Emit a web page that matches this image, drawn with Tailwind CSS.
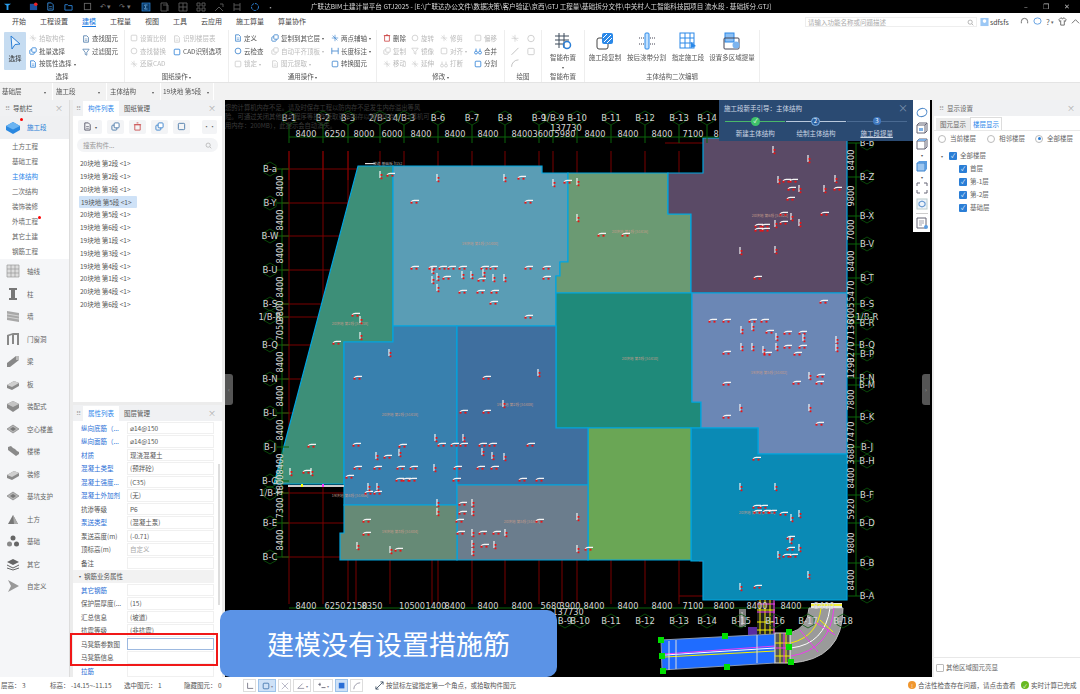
<!DOCTYPE html>
<html lang="zh">
<head>
<meta charset="UTF-8" />
<title>广联达BIM土建计量平台 GTJ2025</title>
<script src="https://cdn.jsdelivr.net/npm/@tailwindcss/browser@4"></script>
</head>
<body class="bg-white overflow-hidden">
<svg class="hidden">
  <symbol id="doc" viewBox="0 0 10 10"><path d="M2 1h4l2 2v6H2z" fill="none" stroke="currentColor"/><path d="M3.5 5h3M3.5 7h3" stroke="currentColor" stroke-width=".7"/></symbol>
  <symbol id="box" viewBox="0 0 10 10"><rect x="1.5" y="1.5" width="7" height="7" rx="1" fill="none" stroke="currentColor"/></symbol>
  <symbol id="two" viewBox="0 0 10 10"><rect x="1" y="3.5" width="5.5" height="5.5" rx="1" fill="none" stroke="currentColor"/><rect x="3.5" y="1" width="5.5" height="5.5" rx="1" fill="#fff" stroke="currentColor"/></symbol>
  <symbol id="cross" viewBox="0 0 10 10"><path d="M5 1v8M1 5h8M2 2l6 6" fill="none" stroke="currentColor" stroke-width=".8"/></symbol>
  <symbol id="circ" viewBox="0 0 10 10"><circle cx="5" cy="5" r="3.6" fill="none" stroke="currentColor"/></symbol>
  <symbol id="funnel" viewBox="0 0 10 10"><path d="M1 1.5h8L6 5.5V9L4 8V5.5z" fill="none" stroke="currentColor" stroke-width=".9"/></symbol>
  <symbol id="dots" viewBox="0 0 10 10"><circle cx="2.5" cy="7" r="1.8" fill="none" stroke="currentColor"/><circle cx="7.5" cy="7" r="1.8" fill="none" stroke="currentColor"/><path d="M2.5 5V2M7.5 5V2" stroke="currentColor"/></symbol>
  <symbol id="nav-cube" viewBox="0 0 14 14"><path d="M1 5l6-3 6 3v4l-6 4-6-4z" fill="#8a8a8a"/><path d="M1 5l6 3 6-3-6-3z" fill="#c4c4c4"/></symbol>
  <symbol id="nav-slab" viewBox="0 0 14 14"><path d="M1 8l7-4 5 2v3l-7 4-5-2z" fill="#8a8a8a"/><path d="M1 8l7-4 5 2-7 4z" fill="#cfcfcf"/></symbol>
  <symbol id="nav-diamond" viewBox="0 0 14 14"><path d="M1 7l6-4 6 4-6 4z" fill="#b4b4b4" stroke="#777" stroke-width=".6"/><path d="M4 7l3-2 3 2-3 2z" fill="#777"/></symbol>
  <symbol id="nav-stairs" viewBox="0 0 14 14"><path d="M2 3l3-1 2 2 2 1 2 2 2 1v2l-3 2-8-6z" fill="#8a8a8a"/></symbol>
  <symbol id="nav-pile" viewBox="0 0 14 14"><circle cx="7" cy="4" r="2.5" fill="#666"/><circle cx="3.5" cy="10" r="2.5" fill="#888"/><circle cx="10.500" cy="10" r="2.5" fill="#666"/></symbol>
</svg>

<div class="w-[1080px] h-[694px] flex flex-col relative blur-[0.4px] font-['Noto_Sans_CJK_SC','Liberation_Sans',sans-serif] text-[6.5px] leading-none text-[#555]">

  <!-- title bar -->
  <div class="h-[13px] bg-black flex items-center text-white shrink-0">
    <div class="w-[311px] flex items-center pl-[3px] gap-[8px] shrink-0">
      <svg width="9" height="9" viewBox="0 0 10 10"><path d="M1 2h8L6 4v5H4V4z" fill="#2aa0f0"/></svg>
      <svg class="ml-[9px]" width="9" height="9" viewBox="0 0 10 10"><rect x="1" y="2" width="8" height="7" fill="#1d4f9c"/><circle cx="7.500" cy="2.500" r="2" fill="#e22"/></svg>
      <svg width="9" height="9" viewBox="0 0 10 10" class="text-[#3a8fe0]"><use href="#doc"/></svg>
      <svg class="ml-[1px]" width="9" height="9" viewBox="0 0 10 10"><path d="M1 3h3l1 1h4v5H1z" fill="none" stroke="#2c86da"/></svg>
      <svg class="ml-[2px]" width="9" height="9" viewBox="0 0 10 10"><rect x="1.500" y="1.500" width="7" height="7" fill="none" stroke="#666"/></svg>
      <span class="text-[#777]">↶ ▾</span>
      <span class="text-[#777]">↷ ▾</span>
      <svg class="ml-[2px]" width="10" height="10" viewBox="0 0 10 10"><rect x="1" y="1" width="8" height="8" fill="#0c3a66" stroke="#2c86da" stroke-width=".7"/><path d="M3.500 3h3M3.500 7h3M3.500 3L5 5 3.500 7" fill="none" stroke="#7fc2f5" stroke-width=".7"/></svg>
      <svg class="ml-[1px]" width="10" height="10" viewBox="0 0 10 10"><path d="M1 1h6v8H1zM3 3h5v6" fill="none" stroke="#555"/></svg>
      <svg width="10" height="10" viewBox="0 0 10 10"><path d="M1 1h8v8H1zM1 5h8M5 1v8" fill="none" stroke="#555"/></svg>
      <svg width="10" height="10" viewBox="0 0 10 10"><path d="M1 1h3v3H1zM6 1h3v3H6zM1 6h3v3H1zM6 6h3v3H6z" fill="none" stroke="#555"/></svg>
      <svg width="10" height="10" viewBox="0 0 10 10"><path d="M1 9l4-4 4 4M6 2h3v3" fill="none" stroke="#555"/></svg>
      <svg width="10" height="10" viewBox="0 0 10 10"><path d="M2 1v8M8 1v8M2 3h6M2 7h6" fill="none" stroke="#555"/></svg>
      <svg width="10" height="10" viewBox="0 0 10 10"><circle cx="5" cy="5" r="3.500" fill="none" stroke="#2c7fd0" stroke-dasharray="3 1"/></svg>
      <span class="text-[#999] text-[5px]">▪</span>
    </div>
    <div class="flex-1 text-[6.6px] whitespace-nowrap text-[#ddd]">广联达BIM土建计量平台 GTJ2025 - [E:\广联达办公文件\数据决策\客户验证\京西\GTJ 工程量\基础拆分文件\中关村人工智能科技园项目 流水段 - 基础拆分.GTJ]</div>
    <div class="w-[66px] flex gap-[15px] text-[#bbb] text-[7px] pl-[10px]"><span>–</span><span>❐</span><span>✕</span></div>
  </div>

  <!-- tabs -->
  <div class="h-[17px] flex items-center shrink-0 bg-white text-[7px] text-[#444] pl-[12px] gap-[14px] relative">
    <span>开始</span><span>工程设置</span>
    <span class="text-[#1c7ae0] border-b border-[#1c7ae0] pb-[1px] mt-[1px]">建模</span>
    <span>工程量</span><span>视图</span><span>工具</span><span>云应用</span><span>施工算量</span><span>算量协作</span>
    <div class="absolute left-[805px] top-[4px] w-[172px] h-[10px] border border-[#eee] text-[#aaa] text-[6.5px] flex items-center justify-between px-[2px]"><span>请输入功能名称或问题描述</span><svg width="7" height="7" viewBox="0 0 10 10"><circle cx="4.500" cy="4.500" r="3" fill="none" stroke="#999"/><path d="M7 7l2 2" stroke="#999"/></svg></div>
    <div class="absolute left-[980px] top-[4px] flex items-center gap-[1px] text-[#444]">
      <svg width="9" height="10" viewBox="0 0 10 10"><rect x=".5" y=".5" width="9" height="9" fill="#9cc8f5"/><circle cx="5" cy="4" r="2" fill="#fff"/></svg><span class="text-[7px]">sdfsfs</span>
    </div>
    <div class="absolute left-[1020px] top-[4px] flex items-center gap-[4px] text-[#666]">
      <svg width="9" height="9" viewBox="0 0 10 10"><path d="M1.500 7V5a3.500 3.500 0 017 0v2" fill="none" stroke="#666"/></svg>
      <svg width="9" height="9" viewBox="0 0 10 10"><ellipse cx="5" cy="4.500" rx="4" ry="3.500" fill="none" stroke="#5a9be0"/></svg>
      <span class="text-[8px]">?</span><span class="text-[5px] -ml-[3px]">▾</span>
      <svg width="9" height="9" viewBox="0 0 10 10"><path d="M3 1L1 3l1 2 1-1v5h4V4l1 1 1-2-2-2H6a1 1 0 01-2 0z" fill="none" stroke="#666"/></svg>
      <svg width="9" height="9" viewBox="0 0 10 10"><path d="M1 7l4-4 4 4" fill="none" stroke="#666"/></svg>
    </div>
  </div>

  <!-- ribbon -->
  <div class="h-[53px] flex shrink-0 bg-white border-b border-[#e4e4e4]">
    <!-- 选择 -->
    <div class="w-[125px] flex flex-col border-r border-[#eee]">
      <div class="h-[40px] flex pl-[4px] pt-[2px]">
        <div class="w-[22px] h-[38px] bg-[#c6dcf1] rounded-[1px] flex flex-col items-center pt-[3px] gap-[5px] text-[#333]">
          <svg width="13" height="15" viewBox="0 0 13 15"><path d="M2 1l9 8-5 .5L3 14z" fill="#e8f2fb" stroke="#2a7ed6"/></svg>
          <span class="text-[6.5px]">选择</span>
        </div>
        <div class="w-[53px] ml-[3px] flex flex-col">
          <div class="h-[13px] flex items-center gap-[2px] text-[#bbb]"><svg width="8" height="8" class="text-[#ccc]"><use href="#cross"/></svg>拾取构件</div>
          <div class="h-[13px] flex items-center gap-[2px]"><svg width="8" height="8" class="text-[#2a7ed6]"><use href="#two"/></svg>批量选择</div>
          <div class="h-[13px] flex items-center gap-[2px] whitespace-nowrap"><svg width="8" height="8" class="text-[#2a7ed6]"><use href="#doc"/></svg>按属性选择 <span class="text-[4px]">▾</span></div>
        </div>
        <div class="flex flex-col">
          <div class="h-[13px] flex items-center gap-[2px] whitespace-nowrap"><svg width="8" height="8" class="text-[#4a78a8]"><use href="#doc"/></svg>查找图元</div>
          <div class="h-[13px] flex items-center gap-[2px] whitespace-nowrap"><svg width="8" height="8" class="text-[#4a78a8]"><use href="#funnel"/></svg>过滤图元</div>
        </div>
      </div>
      <div class="flex-1 text-center pt-[3px]">选择</div>
    </div>
    <!-- 图纸操作 -->
    <div class="w-[104px] flex flex-col border-r border-[#eee]">
      <div class="h-[40px] flex pl-[5px] pt-[2px] text-[#bbb]">
        <div class="w-[43px] flex flex-col">
          <div class="h-[13px] flex items-center gap-[2px]"><svg width="8" height="8" class="text-[#ccc]"><use href="#box"/></svg>设置比例</div>
          <div class="h-[13px] flex items-center gap-[2px]"><svg width="8" height="8" class="text-[#ccc]"><use href="#circ"/></svg>查找替换</div>
          <div class="h-[13px] flex items-center gap-[2px]"><svg width="8" height="8" class="text-[#ccc]"><use href="#cross"/></svg>还原CAD</div>
        </div>
        <div class="flex flex-col">
          <div class="h-[13px] flex items-center gap-[2px] whitespace-nowrap"><svg width="8" height="8" class="text-[#ccc]"><use href="#doc"/></svg>识别楼层表</div>
          <div class="h-[13px] flex items-center gap-[2px] whitespace-nowrap text-[#555]"><svg width="8" height="8" class="text-[#2a7ed6]"><use href="#box"/></svg>CAD识别选项</div>
        </div>
      </div>
      <div class="flex-1 text-center pt-[3px]">图纸操作 <span class="text-[4px]">▾</span></div>
    </div>
    <!-- 通用操作 -->
    <div class="w-[148px] flex flex-col border-r border-[#eee]">
      <div class="h-[40px] flex pl-[5px] pt-[2px]">
        <div class="w-[37px] flex flex-col">
          <div class="h-[13px] flex items-center gap-[2px]"><svg width="8" height="8" class="text-[#3a82cc]"><use href="#doc"/></svg>定义</div>
          <div class="h-[13px] flex items-center gap-[2px]"><svg width="8" height="8" class="text-[#3a82cc]"><use href="#circ"/></svg>云检查</div>
          <div class="h-[13px] flex items-center gap-[2px] text-[#bbb]"><svg width="8" height="8" class="text-[#ccc]"><use href="#box"/></svg>锁定 <span class="text-[4px]">▾</span></div>
        </div>
        <div class="w-[60px] flex flex-col">
          <div class="h-[13px] flex items-center gap-[2px] whitespace-nowrap"><svg width="8" height="8" class="text-[#3a82cc]"><use href="#two"/></svg>复制到其它层 <span class="text-[4px]">▾</span></div>
          <div class="h-[13px] flex items-center gap-[2px] whitespace-nowrap text-[#bbb]"><svg width="8" height="8" class="text-[#ccc]"><use href="#two"/></svg>自动平齐顶板 <span class="text-[4px]">▾</span></div>
          <div class="h-[13px] flex items-center gap-[2px] whitespace-nowrap text-[#bbb]"><svg width="8" height="8" class="text-[#ccc]"><use href="#doc"/></svg>图元提取 <span class="text-[4px]">▾</span></div>
        </div>
        <div class="flex flex-col">
          <div class="h-[13px] flex items-center gap-[2px] whitespace-nowrap"><svg width="8" height="8" class="text-[#3a82cc]"><use href="#cross"/></svg>两点辅轴 <span class="text-[4px]">▾</span></div>
          <div class="h-[13px] flex items-center gap-[2px] whitespace-nowrap"><svg width="8" height="8" viewBox="0 0 10 10"><path d="M1 1v8M9 1v8M1 5h8" fill="none" stroke="#3a82cc"/></svg>长度标注 <span class="text-[4px]">▾</span></div>
          <div class="h-[13px] flex items-center gap-[2px] whitespace-nowrap"><svg width="8" height="8" class="text-[#3a82cc]"><use href="#box"/></svg>转换图元</div>
        </div>
      </div>
      <div class="flex-1 text-center pt-[3px]">通用操作 <span class="text-[4px]">▾</span></div>
    </div>
    <!-- 修改 -->
    <div class="w-[128px] flex flex-col border-r border-[#eee]">
      <div class="h-[40px] flex pl-[6px] pt-[2px] text-[#bbb]">
        <div class="w-[28px] flex flex-col">
          <div class="h-[13px] flex items-center gap-[2px] text-[#555]"><svg width="8" height="8" viewBox="0 0 10 10"><path d="M2 2h6v7H2zM1 2h8M4 1h2" fill="none" stroke="#c44"/></svg>删除</div>
          <div class="h-[13px] flex items-center gap-[2px]"><svg width="8" height="8" class="text-[#ccc]"><use href="#two"/></svg>复制</div>
          <div class="h-[13px] flex items-center gap-[2px]"><svg width="8" height="8" class="text-[#ccc]"><use href="#cross"/></svg>移动</div>
        </div>
        <div class="w-[29px] flex flex-col">
          <div class="h-[13px] flex items-center gap-[2px]"><svg width="8" height="8" class="text-[#ccc]"><use href="#circ"/></svg>旋转</div>
          <div class="h-[13px] flex items-center gap-[2px]"><svg width="8" height="8" class="text-[#ccc]"><use href="#funnel"/></svg>镜像</div>
          <div class="h-[13px] flex items-center gap-[2px]"><svg width="8" height="8" class="text-[#ccc]"><use href="#cross"/></svg>延伸</div>
        </div>
        <div class="w-[34px] flex flex-col">
          <div class="h-[13px] flex items-center gap-[2px]"><svg width="8" height="8" class="text-[#ccc]"><use href="#cross"/></svg>修剪</div>
          <div class="h-[13px] flex items-center gap-[2px]"><svg width="8" height="8" class="text-[#ccc]"><use href="#box"/></svg>对齐 <span class="text-[4px]">▾</span></div>
          <div class="h-[13px] flex items-center gap-[2px]"><svg width="8" height="8" class="text-[#ccc]"><use href="#dots"/></svg>打断</div>
        </div>
        <div class="flex flex-col">
          <div class="h-[13px] flex items-center gap-[2px]"><svg width="8" height="8" class="text-[#ccc]"><use href="#box"/></svg>偏移</div>
          <div class="h-[13px] flex items-center gap-[2px] text-[#555]"><svg width="8" height="8" class="text-[#2a7ed6]"><use href="#dots"/></svg>合并</div>
          <div class="h-[13px] flex items-center gap-[2px] text-[#555]"><svg width="8" height="8" class="text-[#2a7ed6]"><use href="#box"/></svg>分割</div>
        </div>
      </div>
      <div class="flex-1 text-center pt-[3px]">修改 <span class="text-[4px]">▾</span></div>
    </div>
    <!-- 绘图 -->
    <div class="w-[37px] flex flex-col border-r border-[#eee]">
      <div class="h-[40px] flex pl-[5px] gap-[6px] pt-[2px]">
        <div class="flex flex-col"><svg class="my-[2px]" width="10" height="9" color="#ccc"><use href="#cross"/></svg><svg class="my-[2px]" width="10" height="9" viewBox="0 0 10 10"><path d="M1 9l8-8" stroke="#bbb"/></svg><svg class="my-[2px]" width="10" height="9" viewBox="0 0 10 10"><path d="M1 9a8 8 0 018-8" fill="none" stroke="#bbb"/></svg></div>
        <div class="flex flex-col"><svg class="my-[2px]" width="10" height="9" color="#ccc"><use href="#circ"/></svg><svg class="my-[2px]" width="10" height="9" color="#ccc"><use href="#box"/></svg></div>
      </div>
      <div class="flex-1 text-center pt-[3px]">绘图</div>
    </div>
    <!-- 智能布置 -->
    <div class="w-[43px] flex flex-col border-r border-[#eee]">
      <div class="h-[40px] flex flex-col items-center pt-[2px] gap-[4px]">
        <svg width="18" height="18" viewBox="0 0 18 18"><path d="M1 4h14M1 8h14M1 12h9M5 1v15M10 1v15" stroke="#3c4a5a" fill="none"/><circle cx="13" cy="13" r="3.500" fill="none" stroke="#2a7ed6" stroke-width="1.500"/></svg>
        <span>智能布置</span><span class="text-[4px]">▾</span>
      </div>
      <div class="flex-1 text-center pt-[3px]">智能布置</div>
    </div>
    <!-- 主体结构二次编辑 -->
    <div class="w-[175px] flex flex-col border-r border-[#eee]">
      <div class="h-[40px] flex pt-[2px] pl-[4px] gap-[6px]">
        <div class="flex flex-col items-center gap-[4px] w-[32px]">
          <svg width="18" height="18" viewBox="0 0 18 18"><rect x="1" y="6" width="11" height="11" rx="2" fill="#fff" stroke="#444"/><rect x="6" y="1" width="11" height="11" rx="2" fill="#2a88e8"/><path d="M8 10l7-7M11 11l5-5M7 6l4-4" stroke="#fff"/></svg>
          <span class="whitespace-nowrap">施工段复制</span>
        </div>
        <div class="flex flex-col items-center gap-[4px] w-[39px]">
          <svg width="18" height="18" viewBox="0 0 18 18"><rect x="7" y="1" width="4" height="16" rx="1" fill="#bfe0ff" stroke="#2a88e8"/><path d="M1 6h5M1 12h5M12 6h5M12 12h5" stroke="#445" stroke-dasharray="1 1"/></svg>
          <span class="whitespace-nowrap">按后浇带分割</span>
        </div>
        <div class="flex flex-col items-center gap-[4px] w-[32px]">
          <svg width="18" height="18" viewBox="0 0 18 18"><rect x="1" y="1" width="14" height="15" fill="#fff" stroke="#2a88e8"/><path d="M1 6h14M1 11h14M6 1v15M11 1v15" stroke="#2a88e8"/><path d="M12 10l5 4-5 2z" fill="#2a88e8"/></svg>
          <span class="whitespace-nowrap">指定施工段</span>
        </div>
        <div class="flex flex-col items-center gap-[4px] w-[44px]">
          <svg width="18" height="18" viewBox="0 0 18 18"><rect x="2" y="1" width="9" height="9" fill="#8cc0f5" stroke="#2a88e8"/><rect x="1" y="6" width="15" height="11" rx="1" fill="none" stroke="#445"/><circle cx="13" cy="13" r="3.500" fill="#7db4ee"/></svg>
          <span class="whitespace-nowrap">设置多区域提量</span>
        </div>
      </div>
      <div class="flex-1 text-center pt-[3px]">主体结构二次编辑</div>
    </div>
    <div class="flex-1"></div>
  </div>

  <!-- floor bar -->
  <div class="h-[17px] bg-[#f2f2f2] flex shrink-0 text-[#555] gap-[1px]">
    <div class="w-[53px] flex items-center justify-between px-[2px] pr-[6px] border-r border-white">基础层<span class="text-[4px]">▾</span></div>
    <div class="w-[53px] flex items-center justify-between px-[2px] pr-[6px] border-r border-white">施工段<span class="text-[4px]">▾</span></div>
    <div class="w-[53px] flex items-center justify-between px-[2px] pr-[6px] border-r border-white">主体结构<span class="text-[4px]">▾</span></div>
    <div class="w-[52px] flex items-center justify-between px-[1px] pr-[4px] border-r border-white whitespace-nowrap">19块地 第5段<span class="text-[4px]">▾</span></div>
  </div>

  <!-- main -->
  <div class="h-[577px] flex bg-[#ececec] relative shrink-0">

    <!-- left nav -->
    <div class="w-[70px] bg-[#f5f6f8] border-r border-[#ddd] flex flex-col shrink-0">
      <div class="h-[16px] flex items-center justify-between pl-[5px] pr-[6px] bg-[#f0f1f3]">
        <span class="flex items-center gap-[3px]"><span class="text-[#aaa] text-[7px]">⠿</span>导航栏</span><span class="text-[#aaa] text-[8px]">×</span>
      </div>
      <div class="h-[23px] bg-[#eff0f2] flex items-center pl-[6px] gap-[7px] relative">
        <svg width="14" height="13" viewBox="0 0 14 13"><path d="M0 5l7-4 7 4v4l-7 4-7-4z" fill="#2a88e0"/><path d="M0 5l7-4 7 4-7 3.500z" fill="#6ab4f2"/></svg>
        <span class="text-[#2a7ed6]">施工段</span>
        <span class="absolute left-[20px] top-[2px] w-[3px] h-[3px] rounded-full bg-[#f00]"></span>
      </div>
      <div class="bg-white flex flex-col pl-[12px] h-[120px] text-[#666]">
        <div class="h-[15px] flex items-center">土方工程</div>
        <div class="h-[15px] flex items-center">基础工程</div>
        <div class="h-[15px] flex items-center text-[#2a86ea]">主体结构</div>
        <div class="h-[15px] flex items-center">二次结构</div>
        <div class="h-[15px] flex items-center">装饰装修</div>
        <div class="h-[15px] flex items-center relative">外墙工程<span class="absolute left-[26px] top-[2px] w-[3px] h-[3px] rounded-full bg-[#f00]"></span></div>
        <div class="h-[15px] flex items-center">其它土建</div>
        <div class="h-[15px] flex items-center">钢筋工程</div>
      </div>
      <div class="flex flex-col pl-[6px] text-[#666] pt-[1px]">
        <div class="h-[22.5px] flex items-center gap-[7px]"><svg width="14" height="14" viewBox="0 0 14 14"><path d="M1 1h12v12H1zM1 5h12M1 9h12M5 1v12M9 1v12" fill="#ddd" stroke="#999" stroke-width=".7"/></svg>轴线</div>
        <div class="h-[22.5px] flex items-center gap-[7px]"><svg width="14" height="14" viewBox="0 0 14 14"><path d="M3 1h8v2H9v8h2v2H3v-2h2V3H3z" fill="#777"/></svg>柱</div>
        <div class="h-[22.5px] flex items-center gap-[7px]"><svg width="14" height="14" viewBox="0 0 14 14"><path d="M1 2l12 2v9L1 11z" fill="#a8a8a8"/><path d="M1 5l12 2M1 8l12 2" stroke="#eee" stroke-width=".6"/></svg>墙</div>
        <div class="h-[22.5px] flex items-center gap-[7px]"><svg width="14" height="14" viewBox="0 0 14 14"><path d="M1 13V3l6-2h6v12h-2V3H8v9H6V3L3 4v9z" fill="#888"/></svg>门窗洞</div>
        <div class="h-[22.5px] flex items-center gap-[7px]"><svg width="14" height="14" viewBox="0 0 14 14"><path d="M1 9l9-7h3v4l-9 7H1z" fill="#888"/><path d="M10 2h3v4h-3z" fill="#bbb"/></svg>梁</div>
        <div class="h-[22.5px] flex items-center gap-[7px]"><svg width="14" height="14"><use href="#nav-slab"/></svg>板</div>
        <div class="h-[22.5px] flex items-center gap-[7px]"><svg width="14" height="14"><use href="#nav-cube"/></svg>装配式</div>
        <div class="h-[22.5px] flex items-center gap-[7px]"><svg width="14" height="14"><use href="#nav-diamond"/></svg>空心楼盖</div>
        <div class="h-[22.5px] flex items-center gap-[7px]"><svg width="14" height="14"><use href="#nav-stairs"/></svg>楼梯</div>
        <div class="h-[22.5px] flex items-center gap-[7px]"><svg width="14" height="14"><use href="#nav-slab"/></svg>装修</div>
        <div class="h-[22.5px] flex items-center gap-[7px]"><svg width="14" height="14"><use href="#nav-diamond"/></svg>基坑支护</div>
        <div class="h-[22.5px] flex items-center gap-[7px]"><svg width="14" height="14" viewBox="0 0 14 14"><path d="M2 12l5-9 5 9z" fill="#777"/><path d="M7 3l5 9H8z" fill="#aaa"/></svg>土方</div>
        <div class="h-[22.5px] flex items-center gap-[7px]"><svg width="14" height="14"><use href="#nav-pile"/></svg>基础</div>
        <div class="h-[22.5px] flex items-center gap-[7px]"><svg width="14" height="14" viewBox="0 0 14 14"><path d="M1 5l6-3 6 3-6 3z" fill="#666"/><path d="M1 8l6 3 6-3M1 11l6 2 6-2" fill="none" stroke="#666"/></svg>其它</div>
        <div class="h-[22.5px] flex items-center gap-[7px]"><svg width="14" height="14" viewBox="0 0 14 14"><path d="M2 1l11 6-11 6 3-6z" fill="#999"/></svg>自定义</div>
      </div>
    </div>

    <!-- centre panels -->
    <div class="w-[149px] ml-[3px] flex flex-col gap-[3px] shrink-0">
      <div class="h-[302px] bg-white flex flex-col">
        <div class="h-[16px] bg-[#f0f1f3] flex items-center relative shrink-0">
          <span class="text-[#aaa] text-[7px] pl-[3px] w-[10px]">⠿</span>
          <span class="h-[15px] mt-[1px] w-[36px] bg-white text-[#2a86ea] flex items-center justify-center">构件列表</span>
          <span class="pl-[5px]">图纸管理</span>
          <span class="absolute right-[6px] text-[#aaa] text-[8px]">×</span>
        </div>
        <div class="h-[18px] flex items-center pl-[5px] pt-[3px] gap-[5px] shrink-0">
          <span class="w-[24px] h-[14px] bg-[#f3f4f6] rounded-[2px] flex items-center justify-center gap-[3px]"><svg width="9" height="9" color="#556"><use href="#doc"/></svg><span class="text-[4px]">▾</span></span>
          <span class="w-[17px] h-[14px] bg-[#f3f4f6] rounded-[2px] flex items-center justify-center"><svg width="9" height="9" color="#4a78a8"><use href="#two"/></svg></span>
          <span class="w-[17px] h-[14px] bg-[#f3f4f6] rounded-[2px] flex items-center justify-center"><svg width="9" height="9" viewBox="0 0 10 10"><path d="M2 3h6v6H2zM1 3h8M4 1h2" fill="none" stroke="#c55"/></svg></span>
          <span class="w-[17px] h-[14px] bg-[#f3f4f6] rounded-[2px] flex items-center justify-center"><svg width="9" height="9" color="#3a82cc"><use href="#two"/></svg></span>
          <span class="w-[17px] h-[14px] bg-[#f3f4f6] rounded-[2px] flex items-center justify-center"><svg width="9" height="9" color="#4a78a8"><use href="#box"/></svg></span>
          <span class="w-[15px] h-[14px] bg-[#f3f4f6] rounded-[2px] flex items-center justify-center ml-[7px] text-[6px]">••</span>
        </div>
        <div class="mx-[4px] mt-[4px] h-[14px] rounded-[7px] bg-[#f3f4f6] flex items-center justify-between px-[6px] text-[#999] shrink-0">搜索构件...<svg width="7" height="7" viewBox="0 0 10 10"><circle cx="4.500" cy="4.500" r="3" fill="none" stroke="#aaa"/><path d="M7 7l2 2" stroke="#aaa"/></svg></div>
        <div class="flex flex-col mt-[5px] pl-[6px] text-[6.5px]">
          <div class="h-[12.8px] flex items-center px-[1px]">20块地 第2段 &lt;1&gt;</div>
          <div class="h-[12.8px] flex items-center px-[1px]">19块地 第2段 &lt;1&gt;</div>
          <div class="h-[12.8px] flex items-center px-[1px]">20块地 第3段 &lt;1&gt;</div>
          <div class="h-[12px] my-[0.4px] flex items-center px-[2px] w-[58px] bg-[#cfe2f7] rounded-[1px]">19块地 第5段 &lt;1&gt;</div>
          <div class="h-[12.8px] flex items-center px-[1px]">20块地 第5段 &lt;1&gt;</div>
          <div class="h-[12.8px] flex items-center px-[1px]">19块地 第6段 &lt;1&gt;</div>
          <div class="h-[12.8px] flex items-center px-[1px]">19块地 第1段 &lt;1&gt;</div>
          <div class="h-[12.8px] flex items-center px-[1px]">19块地 第3段 &lt;1&gt;</div>
          <div class="h-[12.8px] flex items-center px-[1px]">19块地 第4段 &lt;1&gt;</div>
          <div class="h-[12.8px] flex items-center px-[1px]">20块地 第1段 &lt;1&gt;</div>
          <div class="h-[12.8px] flex items-center px-[1px]">20块地 第4段 &lt;1&gt;</div>
          <div class="h-[12.8px] flex items-center px-[1px]">20块地 第6段 &lt;1&gt;</div>
        </div>
      </div>
      <div class="flex-1 bg-white flex flex-col overflow-hidden relative">
        <div class="h-[16px] bg-[#f0f1f3] flex items-center relative shrink-0">
          <span class="text-[#aaa] text-[7px] pl-[3px] w-[10px]">⠿</span>
          <span class="h-[15px] mt-[1px] w-[36px] bg-white text-[#2a86ea] flex items-center justify-center">属性列表</span>
          <span class="pl-[5px]">图层管理</span>
          <span class="absolute right-[6px] text-[#aaa] text-[8px]">×</span>
        </div>
        <div class="absolute right-[2px] top-[59px] w-[2px] h-[141px] bg-[#ddd]"></div>
        <div class="flex flex-col text-[6.5px]">
          <div class="h-[13.5px] flex items-center"><span class="w-[54px] pl-[8px] text-[#2a6fd6]">纵向底筋（...</span><span class="w-[87px] h-[12.5px] border border-[#f0f0f0] flex items-center px-[2px]">⌀14@150</span></div>
          <div class="h-[13.5px] flex items-center"><span class="w-[54px] pl-[8px] text-[#2a6fd6]">纵向面筋（...</span><span class="w-[87px] h-[12.5px] border border-[#f0f0f0] flex items-center px-[2px]">⌀14@150</span></div>
          <div class="h-[13.5px] flex items-center"><span class="w-[54px] pl-[8px] text-[#2a6fd6]">材质</span><span class="w-[87px] h-[12.5px] border border-[#f0f0f0] flex items-center px-[2px]">现浇混凝土</span></div>
          <div class="h-[13.5px] flex items-center"><span class="w-[54px] pl-[8px] text-[#2a6fd6]">混凝土类型</span><span class="w-[87px] h-[12.5px] border border-[#f0f0f0] flex items-center px-[2px]">(预拌砼)</span></div>
          <div class="h-[13.5px] flex items-center"><span class="w-[54px] pl-[8px] text-[#2a6fd6]">混凝土强度...</span><span class="w-[87px] h-[12.5px] border border-[#f0f0f0] flex items-center px-[2px]">(C35)</span></div>
          <div class="h-[13.5px] flex items-center"><span class="w-[54px] pl-[8px] text-[#2a6fd6]">混凝土外加剂</span><span class="w-[87px] h-[12.5px] border border-[#f0f0f0] flex items-center px-[2px]">(无)</span></div>
          <div class="h-[13.5px] flex items-center"><span class="w-[54px] pl-[8px]">抗渗等级</span><span class="w-[87px] h-[12.5px] border border-[#f0f0f0] flex items-center px-[2px]">P6</span></div>
          <div class="h-[13.5px] flex items-center"><span class="w-[54px] pl-[8px] text-[#2a6fd6]">泵送类型</span><span class="w-[87px] h-[12.5px] border border-[#f0f0f0] flex items-center px-[2px]">(混凝土泵)</span></div>
          <div class="h-[13.5px] flex items-center"><span class="w-[54px] pl-[8px]">泵送高度(m)</span><span class="w-[87px] h-[12.5px] border border-[#f0f0f0] flex items-center px-[2px]">(-0.71)</span></div>
          <div class="h-[13.5px] flex items-center"><span class="w-[54px] pl-[8px]">顶标高(m)</span><span class="w-[87px] h-[12.5px] border border-[#f0f0f0] flex items-center px-[2px] text-[#aaa]">自定义</span></div>
          <div class="h-[13.5px] flex items-center"><span class="w-[54px] pl-[8px]">备注</span><span class="w-[87px] h-[12.5px] border border-[#f0f0f0]"></span></div>
          <div class="h-[13.5px] w-[141px] flex items-center bg-[#f2f2f2] pl-[6px] gap-[3px]"><span class="text-[4px]">▾</span>钢筋业务属性</div>
          <div class="h-[13.5px] flex items-center"><span class="w-[54px] pl-[8px] text-[#2a6fd6]">其它钢筋</span><span class="w-[87px] h-[12.5px] border border-[#f0f0f0]"></span></div>
          <div class="h-[13.5px] flex items-center"><span class="w-[54px] pl-[8px] whitespace-nowrap">保护层厚度(...</span><span class="w-[87px] h-[12.5px] border border-[#f0f0f0] flex items-center px-[2px]">(15)</span></div>
          <div class="h-[13.5px] flex items-center"><span class="w-[54px] pl-[8px]">汇总信息</span><span class="w-[87px] h-[12.5px] border border-[#f0f0f0] flex items-center px-[2px]">(坡道)</span></div>
          <div class="h-[13.5px] flex items-center"><span class="w-[54px] pl-[8px]">抗震等级</span><span class="w-[87px] h-[12.5px] border border-[#f0f0f0] flex items-center px-[2px]">(非抗震)</span></div>
          <div class="h-[13.5px] flex items-center"><span class="w-[54px] pl-[8px]">马凳筋参数图</span><span class="w-[87px] h-[12.5px] border border-[#9db9e0]"></span></div>
          <div class="h-[13.5px] flex items-center"><span class="w-[54px] pl-[8px]">马凳筋信息</span><span class="w-[87px] h-[12.5px] border border-[#f0f0f0]"></span></div>
          <div class="h-[13.5px] flex items-center"><span class="w-[54px] pl-[8px] text-[#2a6fd6]">拉筋</span><span class="w-[87px] h-[12.5px] border border-[#f0f0f0]"></span></div>
        </div>
      </div>
    </div>

    <!-- canvas -->
    <div class="w-[707px] ml-[3px] h-[577px] bg-black relative shrink-0 overflow-hidden">
      <svg id="cad" class="absolute inset-0" width="707" height="577" viewBox="225 100 707 577" font-family="DejaVu Sans"></svg>
      <div class="absolute left-0 top-[3px] w-[205px] text-[#3a3a3a] text-[6.3px] leading-[9px]">您的计算机内存不足。请及时保存工程以防内存不足发生内存溢出等风险。可通过关闭其他应用程序等操作获取更多内存以释放内存。（计算机可用内存：200MB），此提示会自动消失。</div>

      <!-- guide panel -->
      <div class="absolute left-[494px] top-0 w-[194px] h-[41px] bg-[#2a4a72] text-[#ccd6e4] text-[6.5px] flex flex-col">
        <div class="h-[16px] flex items-center justify-between px-[5px]"><span>施工段新手引导：主体结构</span><span class="text-[#7f94ae] text-[10px]">×</span></div>
        <div class="h-[10px] grid grid-cols-3 gap-[1px] px-[6px] items-center">
          <div class="h-[1px] bg-[#4ab86a] relative"><span class="absolute left-[26px] -top-[4px] w-[9px] h-[9px] rounded-full bg-[#3ec26a] text-white text-[6px] flex items-center justify-center">✓</span></div>
          <div class="h-[1px] bg-[#b8c8dc] relative"><span class="absolute left-[25px] -top-[4px] w-[9px] h-[9px] rounded-full bg-[#2a5fa0] border border-[#7fb0e0] text-white text-[6px] flex items-center justify-center">2</span></div>
          <div class="h-[1px] bg-[#4a6a92] relative"><span class="absolute left-[26px] -top-[3.500px] w-[8px] h-[8px] rounded-full bg-[#3f78c0] text-white text-[6px] flex items-center justify-center">3</span></div>
        </div>
        <div class="flex-1 grid grid-cols-3 px-[6px] items-center text-center"><span>新建主体结构</span><span>绘制主体结构</span><span class="underline">施工段提量</span></div>
      </div>

      <!-- floating view toolbar -->
      <div class="absolute left-[688px] top-0 w-[17px] h-[132px] bg-white flex flex-col items-center pt-[7px] gap-[4px]">
        <svg width="12" height="11" viewBox="0 0 12 11"><ellipse cx="6" cy="5.500" rx="5" ry="4" fill="none" stroke="#4a86c8" transform="rotate(-20 6 5.500)"/></svg>
        <svg width="12" height="12" viewBox="0 0 12 12"><path d="M1 3h8v8H1zM1 3l2-2h8v8l-2 2M9 3l2-2" fill="none" stroke="#667"/><rect x="3" y="6" width="4" height="3" fill="#7fb2e8"/></svg>
        <svg width="12" height="12" viewBox="0 0 12 12"><path d="M1 3h8v8H1zM1 3l2-2h8v8l-2 2M9 3l2-2" fill="none" stroke="#667"/><path d="M1 3l2-2h8l-2 2z" fill="#7fb2e8"/></svg>
        <span class="text-[4px] -my-[1px]">▾</span>
        <svg width="12" height="12" viewBox="0 0 12 12"><path d="M1 3h8v8H1z" fill="#9cc6f0" stroke="#3a82cc"/><path d="M1 3l2-2h8v8l-2 2V3z" fill="#5a9ce0"/></svg>
        <span class="text-[4px] -my-[1px]">▾</span>
        <svg width="12" height="12" viewBox="0 0 12 12"><path d="M1 4V1h3M8 1h3v3M11 8v3H8M4 11H1V8" fill="none" stroke="#667"/></svg>
        <svg width="12" height="12" viewBox="0 0 12 12"><rect x="1" y="1" width="10" height="10" fill="#edf3fa" stroke="#bcc"/><path d="M6 3l3 1.500v3L6 9 3 7.500v-3z" fill="none" stroke="#4a86c8"/></svg>
        <div class="w-[12px] h-[1px] bg-[#ccc] -my-[1px]"></div>
        <svg width="12" height="12" viewBox="0 0 12 12"><path d="M1 1h9v10H1z" fill="none" stroke="#667"/><path d="M3 4h5M3 6h5M3 8h3" stroke="#667" stroke-width=".6"/><circle cx="10" cy="10" r="2" fill="#5a9ce0"/></svg>
      </div>

      <!-- collapse handles -->
      <div class="absolute left-0 top-[274px] w-[8px] h-[31px] bg-[#555] rounded-r-[3px] flex items-center justify-center text-[#999] text-[6px]">‹</div>
      <div class="absolute right-[2px] top-[274px] w-[8px] h-[31px] bg-[#555] rounded-l-[3px] flex items-center justify-center text-[#999] text-[6px]">›</div>
    </div>

    <!-- right panel -->
    <div class="flex-1 ml-[2px] bg-white flex flex-col relative text-[#666]">
      <div class="h-[16px] bg-[#f0f1f3] flex items-center justify-between pl-[5px] pr-[5px] shrink-0">
        <span class="flex items-center gap-[3px]"><span class="text-[#aaa] text-[7px]">⠿</span>显示设置</span><span class="text-[#aaa] text-[8px]">×</span>
      </div>
      <div class="h-[15px] flex items-end pl-[2px] border-b border-[#e8e8e8] shrink-0">
        <span class="w-[34px] h-[12px] bg-[#ececec] flex items-center justify-center">图元显示</span>
        <span class="w-[32px] h-[13px] bg-white border border-b-0 border-[#ddd] text-[#2a86ea] flex items-center justify-center">楼层显示</span>
      </div>
      <div class="h-[15px] flex items-center pl-[4px] shrink-0">
        <span class="w-[49px] flex items-center gap-[4px]"><span class="w-[8px] h-[8px] rounded-full border border-[#bbb]"></span>当前楼层</span>
        <span class="w-[48px] flex items-center gap-[4px]"><span class="w-[8px] h-[8px] rounded-full border border-[#bbb]"></span>相邻楼层</span>
        <span class="flex items-center gap-[4px]"><span class="w-[8px] h-[8px] rounded-full border border-[#bbb] flex items-center justify-center"><span class="w-[3px] h-[3px] rounded-full bg-[#2a7ed6]"></span></span>全部楼层</span>
      </div>
      <div class="flex flex-col mt-[3px] pl-[7px]">
        <div class="h-[13px] flex items-center gap-[3px]"><span class="text-[4px] w-[5px]">▾</span><span class="w-[8px] h-[8px] bg-[#2a7ed6] rounded-[1px] text-white text-[6px] flex items-center justify-center">✓</span>全部楼层</div>
        <div class="h-[13px] flex items-center gap-[3px] pl-[18px]"><span class="w-[8px] h-[8px] bg-[#2a7ed6] rounded-[1px] text-white text-[6px] flex items-center justify-center">✓</span>首层</div>
        <div class="h-[13px] flex items-center gap-[3px] pl-[18px]"><span class="w-[8px] h-[8px] bg-[#2a7ed6] rounded-[1px] text-white text-[6px] flex items-center justify-center">✓</span>第-1层</div>
        <div class="h-[13px] flex items-center gap-[3px] pl-[18px]"><span class="w-[8px] h-[8px] bg-[#2a7ed6] rounded-[1px] text-white text-[6px] flex items-center justify-center">✓</span>第-2层</div>
        <div class="h-[13px] flex items-center gap-[3px] pl-[18px]"><span class="w-[8px] h-[8px] bg-[#2a7ed6] rounded-[1px] text-white text-[6px] flex items-center justify-center">✓</span>基础层</div>
      </div>
      <div class="mt-auto h-[20px] border-t border-[#e8e8e8] flex items-center pl-[2px] gap-[2px]"><span class="w-[8px] h-[8px] border border-[#bbb] rounded-[1px]"></span>其他区域图元亮显</div>
    </div>

    <!-- red highlight + caption -->
    <div class="absolute left-[70px] top-[533px] w-[148px] h-[33px] border-2 border-[#f01818]"></div>
    <div class="absolute left-[220px] top-[510px] w-[337px] h-[67px] bg-[#5b93e6] rounded-[10px] flex items-center justify-center text-white text-[27px] font-normal">建模没有设置措施筋</div>
  </div>

  <!-- status bar -->
  <div class="h-[17px] bg-white flex items-center relative shrink-0 text-[#555]">
    <span class="w-[50px] pl-[1px]">层高： 3</span>
    <span class="w-[74px]">标高： -14.15~-11.15</span>
    <span class="w-[60px]">选中图元： 1</span>
    <span class="w-[59px]">隐藏图元： 0</span>
    <div class="flex items-center gap-[2px] w-[132px] text-[#889]">
      <span class="w-[13px] h-[13px] border border-[#ddd] flex items-center justify-center"><svg width="8" height="8" viewBox="0 0 10 10"><path d="M2 1v7h7" fill="none" stroke="#667"/></svg></span>
      <span class="w-[18px] h-[13px] bg-[#cfe2f7] border border-[#9cc2ea] flex items-center justify-center gap-[1px]"><svg width="8" height="8" color="#3a6ea8"><use href="#box"/></svg><span class="text-[4px]">▾</span></span>
      <span class="w-[13px] h-[13px] border border-[#ddd] flex items-center justify-center"><svg width="8" height="8" viewBox="0 0 10 10"><path d="M1 1l8 8M9 1L1 9" stroke="#aab"/></svg></span>
      <span class="w-[18px] h-[13px] border border-[#ddd] flex items-center justify-center gap-[1px]"><svg width="8" height="8" viewBox="0 0 10 10"><path d="M1 8h8M1 8l6-6" fill="none" stroke="#889"/></svg><span class="text-[4px]">▾</span></span>
      <span class="w-[20px] h-[13px] border border-[#ddd] flex items-center justify-center gap-[1px]"><svg width="9" height="8" viewBox="0 0 10 10"><path d="M1 3h3M3 1v4M5 7h5" stroke="#556"/></svg><span class="text-[4px]">▾</span></span>
      <span class="w-[13px] h-[13px] bg-[#cfe2f7] border border-[#9cc2ea] flex items-center justify-center"><svg width="8" height="8" viewBox="0 0 10 10"><rect x="1" y="1" width="7" height="7" fill="#2a6fd6"/></svg></span>
      <span class="w-[13px] h-[13px] border border-[#ddd] flex items-center justify-center"><svg width="8" height="8" viewBox="0 0 10 10"><path d="M1 9a8 8 0 018-8" fill="none" stroke="#889"/></svg></span>
    </div>
    <svg width="9" height="9" viewBox="0 0 10 10" class="mr-[2px]"><path d="M1 9l8-8M6 1h3v3M1 6v3h3" fill="none" stroke="#456"/></svg>
    <span class="whitespace-nowrap">按鼠标左键指定第一个角点，或拾取构件图元</span>
    <div class="absolute left-[908px] top-[4px] flex items-center gap-[2px]"><span class="w-[8px] h-[8px] rounded-full bg-[#f0962e] text-white text-[5px] flex items-center justify-center">!</span><span class="whitespace-nowrap">合法性检查存在问题，请点击查看</span></div>
    <div class="absolute left-[1021px] top-[4px] flex items-center gap-[2px]"><span class="w-[8px] h-[8px] rounded-full bg-[#67b821] text-white text-[5px] flex items-center justify-center">✓</span><span class="whitespace-nowrap">实时计算已完成</span></div>
  </div>
</div>

<script>
  // cad drawing: page coordinates, filled in once
  const cad = document.getElementById("cad");
  const NS = "http://www.w3.org/2000/svg";
  function add(tag, attrs, text) {
    const el = document.createElementNS(NS, tag);
    for (const k in attrs) el.setAttribute(k, attrs[k]);
    if (text) el.textContent = text;
    cad.appendChild(el);
    return el;
  }
  function hex(x, y) {
    const r = 7;
    const pts = [];
    for (let i = 0; i < 6; i++) {
      const a = Math.PI / 6 + (i * Math.PI) / 3;
      pts.push((x + r * Math.cos(a)).toFixed(1) + "," + (y + r * Math.sin(a)).toFixed(1));
    }
    add("polygon", { points: pts.join(" "), fill: "none", stroke: "#0b5a0b", "stroke-width": 0.8 });
  }
  const RED = "#7a0000";
  const GREEN = "#0a640a";
  const LABEL = "#d4d4d4";

  const topAxis = [["B-1",289],["B-2",323],["B-3",348],["2/B-3",380],["4/B-3",404],["B-6",438],["B-7",472],["B-8",505],["B-9",539],["1/B-9",553],["B-10",577],["B-11",611],["B-12",645],["B-13",679],["B-14",707]];
  const topDims = [["8400",306],["6250",335],["8000",364],["6000",392],["8400",421],["8400",455],["8400",488],["8400",522],["3600",543],["5980",565],["8400",595],["8400",628],["8400",662],["7100",693],["8",716]];
  const leftRows = [["B-a",169],["B-Y",203],["B-W",236],["B-U",270],["B-S",304],["1/B-R",317],["B-Q",345],["B-N",379],["B-L",413],["B-J",447],["B-G",481],["1/B-F",493],["B-E",523],["B-C",557]];
  const leftDims = [["8400",186],["8400",220],["8400",253],["8400",287],["3800",311],["7050",330],["8400",362],["8400",396],["8400",430],["8400",464],["4800",485],["7300",508],["8400",540]];
  const rightRows = [["B-b",143],["B-Z",177],["B-X",216],["B-V",244],["B-T",278],["B-S",304],["1/B-R",317],["B-R",323],["B-Q",345],["B-P",354],["B-N",378],["B-M",385],["B-K",417],["B-J",447],["B-H",461],["B-F",495],["B-D",523],["B-B",563],["B-A",596]];
  const rightDims = [["8400",160],["9800",196],["7000",230],["8400",261],["5470",291],["3005",313],["7136",330],["3270",352],["1290",368],["7800",400],["7470",432],["3680",454],["8400",478],["5920",509],["9800",543],["8400",580]];
  const botAxis = [["B-9",565],["B-10",580],["B-11",611],["B-12",645],["B-13",679],["B-14",707],["B-15",741],["B-16",775],["B-17",808],["B-18",843]];
  const botDims = [["8400",306],["6250",335],["2150",357],["8350",372],["10500",412],["1400",436],["8400",455],["8400",488],["8400",522],["5680",551],["3900",570],["8400",594],["8400",628],["8400",662],["7100",693],["8400",724],["8400",757],["8400",791],["8400",824]];
  const botReds = [289,323,348,356,390,432,438,472,505,539,562,577,611,645,679];

  // red grid under everything
  topAxis.forEach(([, x]) => add("line", { x1: x, x2: x, y1: 151, y2: 180, stroke: RED }));
  botReds.forEach((x) => add("line", { x1: x, x2: x, y1: 484, y2: 604, stroke: RED }));
  leftRows.forEach(([, y]) => add("line", { x1: 282, x2: 400, y1: y, y2: y, stroke: RED }));
  add("line", { x1: 289, x2: 289, y1: 151, y2: 484, stroke: RED });
  add("line", { x1: 323, x2: 323, y1: 151, y2: 484, stroke: RED });
  add("line", { x1: 348, x2: 348, y1: 151, y2: 300, stroke: RED });
  add("line", { x1: 665, x2: 703, y1: 143, y2: 143, stroke: RED });
  add("line", { x1: 679, x2: 703, y1: 596, y2: 596, stroke: RED });
  add("line", { x1: 699, x2: 703, y1: 561, y2: 561, stroke: "#c00" });

  // construction zones
  const zones = [
    ["#3d8f78", "358,166 393,166 393,342 344,342 344,484 274,484"],
    ["#5a9db5", "393,166 542,166 542,173 568,173 568,262 560,262 560,276 556,276 556,326 393,326"],
    ["#6b9a73", "568,173 668,173 668,214 691,214 691,293 556,293 556,276 560,276 560,262 568,262"],
    ["#5a4a66", "703,138 847,138 847,293 691,293 691,214 668,214 668,173 703,173"],
    ["#1f8a7a", "556,293 692,293 692,402 701,402 701,428 556,428"],
    ["#6b87b5", "692,293 847,293 847,454 758,454 758,428 701,428 701,402 692,402"],
    ["#0a8ab5", "691,428 758,428 758,454 847,454 847,600 703,600 703,561 691,561"],
    ["#6aa655", "588,428 691,428 691,560 588,560"],
    ["#3880ae", "393,326 457,326 457,505 344,505 344,342 393,342"],
    ["#3f6f9f", "457,326 556,326 556,428 588,428 588,485 457,485"],
    ["#6b7d8d", "457,485 588,485 588,560 457,560"],
    ["#668a76", "344,505 457,505 457,560 340,560 340,533 344,533"],
  ];
  zones.forEach(([fill, points]) => add("polygon", { points, fill, stroke: "#00a5e0", "stroke-width": 1.2 }));

  [["19块地 第1段 [51400]",480,245],["20块地 第2段 [51418]",350,325],["20块地 第2段 [51418]",400,416],["19块地 第2段 [51408]",515,406],["19块地 第3段 [51404]",400,533],["20块地 第5段 [51422]",522,523],["20块地 第1段 [51416]",630,233],["20块地 第6段 [51420]",770,217],["20块地 第3段 [51410]",640,360],["19块地 第5段 [51402]",769,374],["20块地 第4段 [51412]",757,514],["19块地 第4段 [51406]",350,497]]
    .forEach(([t, x, y]) => add("text", { x, y, "font-size": 3.8, fill: "#c49a8a", "text-anchor": "middle", "font-family": "Noto Sans CJK SC" }, t));

  // white bars with red ends
  const h = [[391,175],[522,178],[568,182],[415,202],[529,202],[415,268],[529,268],[547,268],[547,278],[494,303],[529,317],[356,315],[433,268],[443,268],[452,268],[463,268],[485,268],[494,268],[447,278],[482,280],[463,292],[481,292],[495,292],[337,343],[358,378],[487,378],[464,412],[487,412],[312,446],[357,445],[403,446],[442,445],[455,445],[464,445],[483,445],[493,445],[531,445],[388,457],[358,468],[378,468],[401,468],[414,468],[458,468],[481,468],[495,468],[350,477],[400,480],[407,480],[413,480],[457,480],[523,480],[540,480],[307,472],[369,493],[378,493],[463,504],[463,513],[367,521],[460,521],[540,521],[367,534],[461,533],[483,533],[497,533],[399,550],[485,546],[589,549],[602,235],[626,235],[787,181],[794,181],[792,189],[838,189],[791,199],[784,214],[825,214],[784,223],[759,226],[766,226],[759,230],[766,230],[758,278],[824,302],[713,321],[727,321],[753,321],[765,321],[770,332],[788,333],[803,333],[788,347],[803,347],[727,353],[768,354],[798,354],[727,384],[797,383],[820,383],[821,376],[727,417],[820,424],[757,459],[757,507],[764,507],[758,512],[767,512],[773,512],[784,514],[791,538],[791,549],[787,556],[794,556],[758,587]];
  const v = [[380,175],[437,178],[504,178],[553,183],[432,270],[432,280],[437,277],[437,288],[462,275],[471,275],[483,273],[493,278],[504,278],[360,320],[360,336],[389,353],[538,373],[503,404],[399,453],[435,438],[463,438],[482,452],[376,456],[492,456],[504,457],[434,468],[290,472],[311,472],[368,487],[377,487],[437,503],[437,512],[472,503],[472,512],[577,517],[472,533],[505,533],[357,546],[390,550],[472,544],[472,552],[494,545],[577,549],[577,182],[577,218],[773,150],[808,159],[778,180],[835,179],[799,189],[824,189],[791,217],[775,224],[799,223],[740,251],[775,250],[752,327],[741,330],[741,347],[752,347],[776,337],[803,338],[776,347],[763,350],[836,340],[836,348],[809,376],[740,408],[809,408],[740,487],[775,487],[799,514],[791,518],[790,540],[799,548],[778,555],[808,575],[740,587]];
  h.forEach(([x, y]) => {
    add("path", { d: `M${x - 4} ${y}q1.500 -2 4 -1.600h4`, fill: "none", stroke: "#f4f4f4", "stroke-width": 1.2 });
    add("rect", { x: x - 4.5, y: y - 0.2, width: 2, height: 1.8, fill: "#f01010" });
    add("rect", { x: x + 0.5, y: y - 0.2, width: 2, height: 1.8, fill: "#f01010" });
  });
  v.forEach(([x, y]) => {
    add("line", { x1: x, x2: x, y1: y - 4, y2: y + 3, stroke: "#f4f4f4", "stroke-width": 1.2 });
    add("rect", { x: x + 0.6, y: y - 1, width: 1.8, height: 1.8, fill: "#f01010" });
    add("rect", { x: x + 0.6, y: y + 2.4, width: 1.8, height: 1.8, fill: "#f01010" });
  });

  // stray bars on the slab edges
  add("rect", { x: 365, y: 163, width: 10, height: 1.2, fill: "#ddd" });
  add("text", { x: 373, y: 165, "font-size": 3.8, fill: "#aaa", "font-family": "Noto Sans CJK SC" }, "坡道 基础板 h152");
  add("rect", { x: 288, y: 485, width: 56, height: 2, fill: "#ccc" });
  add("rect", { x: 301, y: 484, width: 2, height: 3, fill: "#ff0" });
  add("rect", { x: 322, y: 484, width: 2, height: 3, fill: "#f3f" });

  // dimension lines
  add("line", { x1: 289, x2: 720, y1: 137, y2: 137, stroke: GREEN });
  add("line", { x1: 282, x2: 282, y1: 169, y2: 557, stroke: GREEN });
  add("line", { x1: 856, x2: 856, y1: 143, y2: 596, stroke: GREEN });
  add("line", { x1: 289, x2: 843, y1: 608, y2: 608, stroke: GREEN });

  topAxis.forEach(([name, x]) => {
    add("line", { x1: x, x2: x, y1: 125, y2: 143, stroke: GREEN });
    hex(x, 118);
    add("text", { x, y: 121, "font-size": 8.5, fill: LABEL, "text-anchor": "middle" }, name);
  });
  topDims.forEach(([t, x]) => add("text", { x, y: 137, "font-size": 8.2, fill: LABEL, "text-anchor": "middle" }, t));
  add("text", { x: 566, y: 131, "font-size": 8.2, fill: LABEL, "text-anchor": "middle" }, "137730");

  leftRows.forEach(([name, y]) => {
    add("line", { x1: 277, x2: 289, y1: y, y2: y, stroke: GREEN });
    hex(270, y);
    add("text", { x: 270, y: y + 3, "font-size": 8.5, fill: LABEL, "text-anchor": "middle" }, name);
  });
  leftDims.forEach(([t, y]) => add("text", { x: 283, y, "font-size": 8.2, fill: LABEL, "text-anchor": "middle", transform: `rotate(-90 283 ${y})` }, t));

  rightRows.forEach(([name, y]) => {
    add("line", { x1: 848, x2: 860, y1: y, y2: y, stroke: GREEN });
    hex(867, y);
    add("text", { x: 867, y: y + 3, "font-size": 8.5, fill: LABEL, "text-anchor": "middle" }, name);
  });
  rightDims.forEach(([t, y]) => add("text", { x: 854, y, "font-size": 8.2, fill: LABEL, "text-anchor": "middle", transform: `rotate(-90 854 ${y})` }, t));

  // ramp model, bottom right
  add("rect", { x: 748, y: 627, width: 9, height: 8, fill: "#5a2ca0" });
  add("rect", { x: 739, y: 609, width: 7, height: 18, fill: "#7d7d7d" });
  add("line", { x1: 742, x2: 742, y1: 612, y2: 625, stroke: "#ddd" });
  add("rect", { x: 757, y: 600, width: 18, height: 34, fill: "#222" });
  add("path", { d: "M760 600v34M765 600v34M770 600v34M757 610h18M757 622h18M757 630h18", stroke: "#f5f000", fill: "none" });
  add("path", { d: "M757 604h18M757 612h18M774 600v34", stroke: "#f03cf0", fill: "none" });
  add("path", { d: "M790 633Q808 628 809 608L843 608Q843 660 790 663Z", fill: "#9a9a9a", stroke: "#bbb" });
  add("rect", { x: 811, y: 603, width: 31, height: 5, fill: "#e8e8e8" });
  add("path", { d: "M811 605h31", stroke: "#f5f000", "stroke-width": 1.5 });
  add("path", { d: "M791 643Q818 636 821 608", fill: "none", stroke: "#f5f000" });
  add("path", { d: "M791 648Q825 644 830 608", fill: "none", stroke: "#fff" });
  add("path", { d: "M791 656Q830 650 834 608", fill: "none", stroke: "#f03cf0" });
  add("path", { d: "M800 630L818 652M815 622L835 635", fill: "none", stroke: "#f03cf0" });
  add("path", { d: "M820 620L833 632", fill: "none", stroke: "#f5f000" });
  add("polygon", { points: "661,640 775,634 775,663 662,670", fill: "#1f6cff", stroke: "#8a98b0" });
  add("path", { d: "M665 655L775 648", stroke: "#fff", fill: "none" });
  add("path", { d: "M665 657L775 651", stroke: "#f5f000", fill: "none" });
  add("path", { d: "M665 654L775 646", stroke: "#f03cf0", fill: "none" });
  add("path", { d: "M669 641V670M676 640V669M757 635V663", stroke: "#ddd", fill: "none" });
  add("rect", { x: 775, y: 633, width: 15, height: 30, fill: "#555", stroke: "#ddd" });
  add("path", { d: "M780 633V663M786 633V663M775 643H790M775 656H790", stroke: "#f5f000", fill: "none" });
  add("path", { d: "M784 633V663M775 648H790", stroke: "#f03cf0", fill: "none" });
  [[661,640],[725,636],[789,632],[662,656],[789,647],[663,671],[727,667],[791,662]].forEach(([x, y]) =>
    add("rect", { x: x - 3, y: y - 3, width: 6, height: 6, fill: "#00e000" })
  );

  // bottom axis goes over the ramp
  botAxis.forEach(([name, x]) => {
    hex(x, 621);
    add("text", { x, y: 624, "font-size": 8.5, fill: LABEL, "text-anchor": "middle" }, name);
  });
  botDims.forEach(([t, x]) => add("text", { x, y: 609, "font-size": 8.2, fill: LABEL, "text-anchor": "middle" }, t));
  add("text", { x: 568, y: 615, "font-size": 8.2, fill: LABEL, "text-anchor": "middle" }, "137730");
</script>
</body>
</html>
